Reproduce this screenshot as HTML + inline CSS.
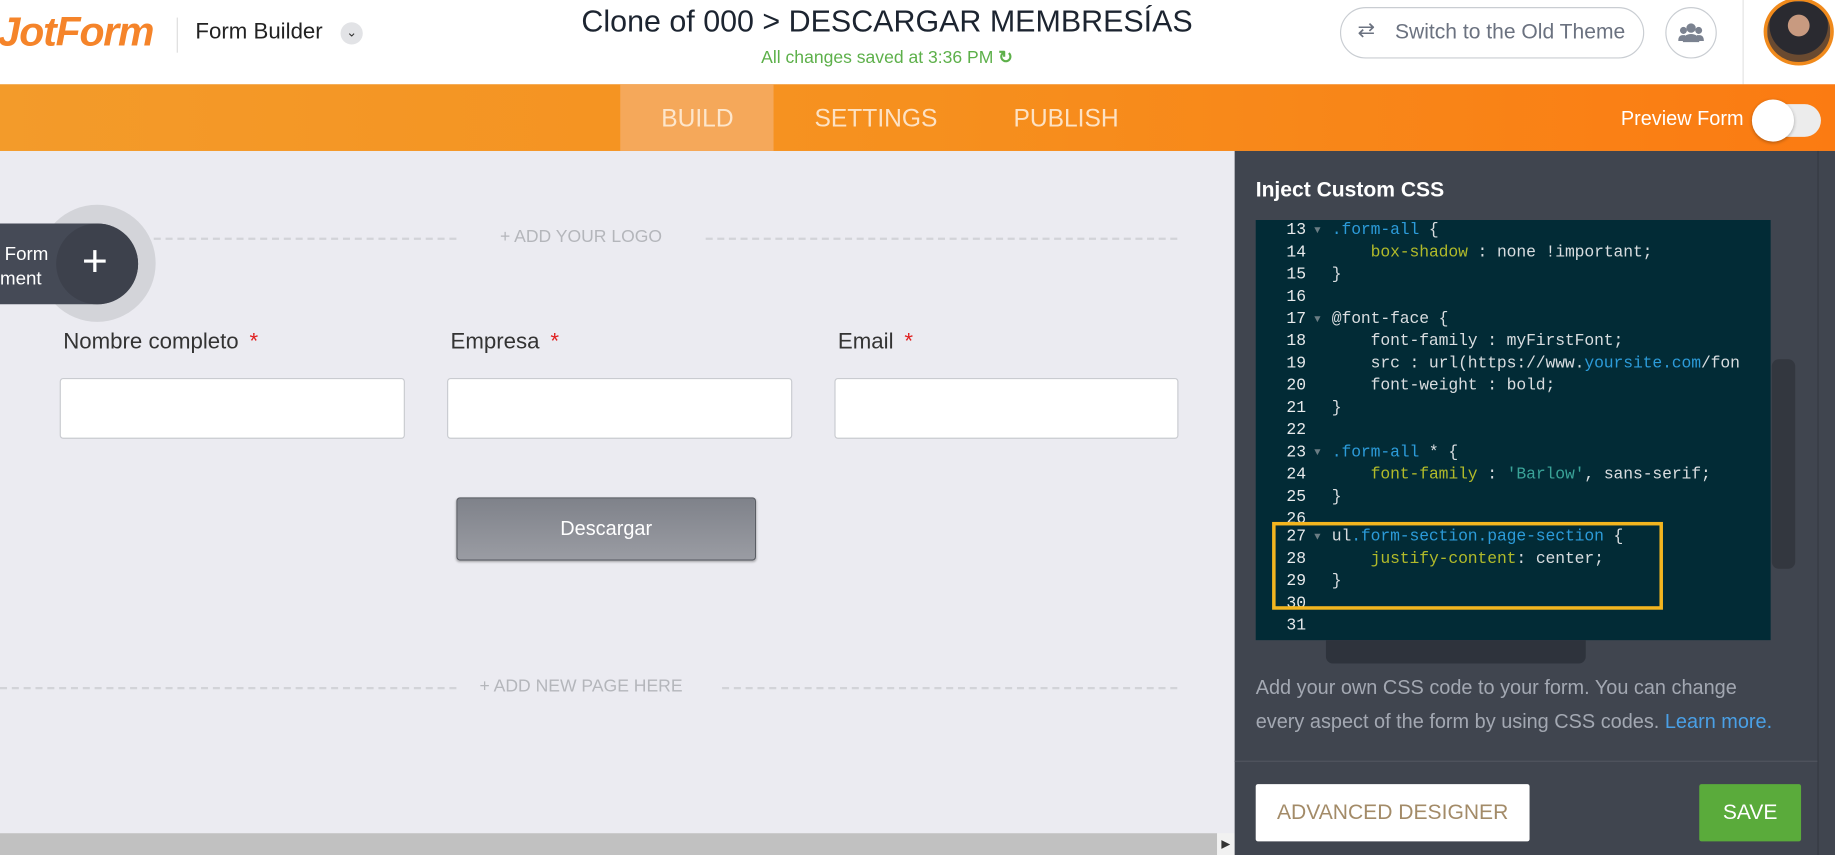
<!DOCTYPE html>
<html><head><meta charset="utf-8"><style>
*{margin:0;padding:0;box-sizing:border-box}
html,body{width:1835px;height:855px;overflow:hidden;background:#ebebf1;font-family:"Liberation Sans",sans-serif}
#w{position:absolute;left:0;top:0;width:1568px;height:731px;transform:scale(1.17028);transform-origin:0 0;background:#ebebf1;overflow:hidden}
.a{position:absolute}
.code div{position:absolute;left:0;height:19px;line-height:19px;white-space:pre;font-family:"Liberation Mono","DejaVu Sans Mono",monospace;font-size:14px;letter-spacing:-0.1px;color:#d9dde0}
.code .n{width:43px;text-align:right;color:#e8eaec;letter-spacing:0}
.k{color:#2c9bd9}.p{color:#b1ba2a}.g{color:#3aa398}
</style></head><body><div id="w">
<div class="a" style="left:0;top:0;width:1568px;height:72px;background:#fff"></div>
<div class="a" style="left:-2px;top:8px;font-size:35px;font-weight:bold;font-style:italic;color:#f5842a;letter-spacing:-1px">JotForm</div>
<div class="a" style="left:151px;top:15px;width:1px;height:30px;background:#ddd"></div>
<div class="a" style="left:167px;top:17px;font-size:19px;color:#222">Form Builder</div>
<div class="a" style="left:291px;top:19px;width:19px;height:19px;border-radius:50%;background:#e2e3e6;font-size:11px;text-align:center;line-height:19px;color:#333">&#8964;</div>
<div class="a" style="left:458px;top:3px;width:600px;text-align:center;font-size:26px;color:#1c2430">Clone of 000 &gt; DESCARGAR MEMBRESÍAS</div>
<div class="a" style="left:458px;top:40px;width:600px;text-align:center;font-size:15px;color:#5db04a">All changes saved at 3:36 PM <span style="font-weight:bold">&#8635;</span></div>
<div class="a" style="left:1145px;top:6px;width:260px;height:44px;border:1px solid #c9cdd2;border-radius:22px"></div>
<div class="a" style="left:1160px;top:15px;font-size:18px;color:#6b7280">&#8644;</div>
<div class="a" style="left:1192px;top:17px;font-size:18px;color:#6b7280">Switch to the Old Theme</div>
<div class="a" style="left:1423px;top:6px;width:44px;height:44px;border:1px solid #c9cdd2;border-radius:50%"></div>
<svg class="a" style="left:1434px;top:18px" width="22" height="20" viewBox="0 0 22 20"><circle cx="11" cy="6" r="4" fill="#7b8290"/><circle cx="4.5" cy="8" r="3" fill="#7b8290"/><circle cx="17.5" cy="8" r="3" fill="#7b8290"/><path d="M4 18c0-5 3-7 7-7s7 2 7 7z" fill="#7b8290"/><path d="M0 17c0-4 2-5 4-5h2v5z M22 17c0-4-2-5-4-5h-2v5z" fill="#7b8290"/></svg>
<div class="a" style="left:1489px;top:0;width:1px;height:72px;background:#e3e3e3"></div>
<div class="a" style="left:1507px;top:-2px;width:60px;height:58px;border-radius:50%;border:3px solid #f08a1c;background:radial-gradient(circle at 50% 40%,#c89a80 0 22%,#2a2a30 23% 60%,#6a4a30 61%)"></div>
<div class="a" style="left:0;top:72px;width:1568px;height:57px;background:linear-gradient(90deg,#f39b2a,#f6901e 50%,#fb7b12)"></div>
<div class="a" style="left:530px;top:72px;width:131px;height:57px;background:#f5a85a"></div>
<div class="a" style="left:565px;top:90px;font-size:21px;color:#fde6cc">BUILD</div>
<div class="a" style="left:696px;top:90px;font-size:21px;color:#fde2c4">SETTINGS</div>
<div class="a" style="left:866px;top:90px;font-size:21px;color:#fde2c4">PUBLISH</div>
<div class="a" style="left:1385px;top:92px;font-size:17px;color:#fff">Preview Form</div>
<div class="a" style="left:1500px;top:89px;width:56px;height:28px;border-radius:14px;background:#ececec"></div>
<div class="a" style="left:1497px;top:85px;width:36px;height:36px;border-radius:50%;background:#fff;box-shadow:0 1px 3px rgba(0,0,0,.3)"></div>
<div class="a" style="left:0;top:203px;width:390px;border-top:2px dashed #d2d3d8"></div>
<div class="a" style="left:603px;top:203px;width:403px;border-top:2px dashed #d2d3d8"></div>
<div class="a" style="left:390px;top:194px;width:213px;text-align:center;font-size:15px;color:#b4b6bb">+ ADD YOUR LOGO</div>
<div class="a" style="left:33px;top:175px;width:100px;height:100px;border-radius:50%;background:#d3d4d9"></div>
<div class="a" style="left:-40px;top:191px;width:158px;height:69px;border-radius:35px;background:#454a56"></div>
<div class="a" style="left:48px;top:191px;width:70px;height:69px;border-radius:50%;background:#3d414c"></div>
<div class="a" style="left:70px;top:203px;font-size:38px;color:#fff;font-weight:300">+</div>
<div class="a" style="left:4px;top:207px;font-size:16px;color:#fff;line-height:21px">Form<br><span style="margin-left:-4px">ment</span></div>
<div class="a" style="left:54px;top:282px;font-size:19px;color:#333">Nombre completo <span style="color:#e02020;margin-left:4px">*</span></div>
<div class="a" style="left:385px;top:282px;font-size:19px;color:#333">Empresa <span style="color:#e02020;margin-left:4px">*</span></div>
<div class="a" style="left:716px;top:282px;font-size:19px;color:#333">Email <span style="color:#e02020;margin-left:4px">*</span></div>
<div class="a" style="left:51px;top:323px;width:295px;height:52px;background:#fff;border:1px solid #c9cbd0;border-radius:3px"></div>
<div class="a" style="left:382px;top:323px;width:295px;height:52px;background:#fff;border:1px solid #c9cbd0;border-radius:3px"></div>
<div class="a" style="left:713px;top:323px;width:294px;height:52px;background:#fff;border:1px solid #c9cbd0;border-radius:3px"></div>
<div class="a" style="left:390px;top:425px;width:256px;height:54px;border:1px solid #5a5d64;border-radius:3px;background:linear-gradient(#7f828a,#9a9ca3);color:#fff;font-size:17px;text-align:center;line-height:52px;box-shadow:0 1px 2px rgba(0,0,0,.3)">Descargar</div>
<div class="a" style="left:0;top:587px;width:390px;border-top:2px dashed #d2d3d8"></div>
<div class="a" style="left:617px;top:587px;width:389px;border-top:2px dashed #d2d3d8"></div>
<div class="a" style="left:390px;top:578px;width:213px;text-align:center;font-size:15px;color:#b4b6bb">+ ADD NEW PAGE HERE</div>
<div class="a" style="left:0;top:712px;width:1040px;height:19px;background:#c1c1c1"></div>
<div class="a" style="left:1040px;top:712px;width:15px;height:19px;background:#f1f1f1;font-size:10px;line-height:19px;text-align:center;color:#333">&#9654;</div>
<div class="a" style="left:1055px;top:129px;width:513px;height:602px;background:#40454f"></div>
<div class="a" style="left:1553px;top:129px;width:1px;height:602px;background:#353942"></div>
<div class="a" style="left:1514px;top:307px;width:20px;height:179px;border-radius:6px;background:#33373f"></div>
<div class="a" style="left:1073px;top:152px;font-size:18px;font-weight:bold;color:#fff">Inject Custom CSS</div>
<div class="a code" style="left:1073px;top:188px;width:440px;height:359px;background:#022b36;overflow:hidden">
<div class="n" style="top:0">13</div>
<div class="n" style="top:19px">14</div><div class="n" style="top:38px">15</div><div class="n" style="top:57px">16</div><div class="n" style="top:76px">17</div><div class="n" style="top:95px">18</div><div class="n" style="top:114px">19</div><div class="n" style="top:133px">20</div><div class="n" style="top:152px">21</div><div class="n" style="top:171px">22</div><div class="n" style="top:190px">23</div><div class="n" style="top:209px">24</div><div class="n" style="top:228px">25</div><div class="n" style="top:247px">26</div><div class="n" style="top:262px">27</div><div class="n" style="top:281px">28</div><div class="n" style="top:300px">29</div><div class="n" style="top:319px">30</div><div class="n" style="top:338px">31</div>
<div style="top:0;left:50px;color:#6b7d84;font-size:9px">&#9660;</div><div style="top:76px;left:50px;color:#6b7d84;font-size:9px">&#9660;</div><div style="top:190px;left:50px;color:#6b7d84;font-size:9px">&#9660;</div><div style="top:262px;left:50px;color:#6b7d84;font-size:9px">&#9660;</div>
<div style="top:0;left:65px"><span class="k">.form-all</span> {</div>
<div style="top:19px;left:65px">    <span class="p">box-shadow</span> : none !important;</div>
<div style="top:38px;left:65px">}</div>
<div style="top:76px;left:65px" class="g">@font-face {</div>
<div style="top:95px;left:65px">    font-family : myFirstFont;</div>
<div style="top:114px;left:65px;width:352px;overflow:hidden">    src : url(https://www.<span class="k">yoursite.com</span>/fon</div>
<div style="top:133px;left:65px">    font-weight : bold;</div>
<div style="top:152px;left:65px" class="g">}</div>
<div style="top:190px;left:65px"><span class="k">.form-all</span> * {</div>
<div style="top:209px;left:65px">    <span class="p">font-family</span> : <span class="g">'Barlow'</span>, sans-serif;</div>
<div style="top:228px;left:65px">}</div>
<div style="top:262px;left:65px">ul<span class="k">.form-section.page-section</span> {</div>
<div style="top:281px;left:65px">    <span class="p">justify-content</span>: center;</div>
<div style="top:300px;left:65px">}</div>
</div>
<div class="a" style="left:1087px;top:446px;width:334px;height:75px;border:3px solid #f3b51f"></div>
<div class="a" style="left:1133px;top:547px;width:222px;height:20px;border-radius:0 0 6px 6px;background:#2e333c"></div>
<div class="a" style="left:1073px;top:574px;font-size:17px;line-height:28.5px;color:#a3a8b2;width:448px">Add your own CSS code to your form. You can change every aspect of the form by using CSS codes. <span style="color:#4aa0e6">Learn more.</span></div>
<div class="a" style="left:1055px;top:650px;width:498px;height:1px;background:#50555f"></div>
<div class="a" style="left:1073px;top:670px;width:234px;height:49px;background:#fff;border-radius:2px;color:#a38b68;font-size:18px;text-align:center;line-height:49px">ADVANCED DESIGNER</div>
<div class="a" style="left:1452px;top:670px;width:87px;height:49px;background:#5aab3b;border-radius:2px;color:#fff;font-size:18px;text-align:center;line-height:49px">SAVE</div>
</div></body></html>
